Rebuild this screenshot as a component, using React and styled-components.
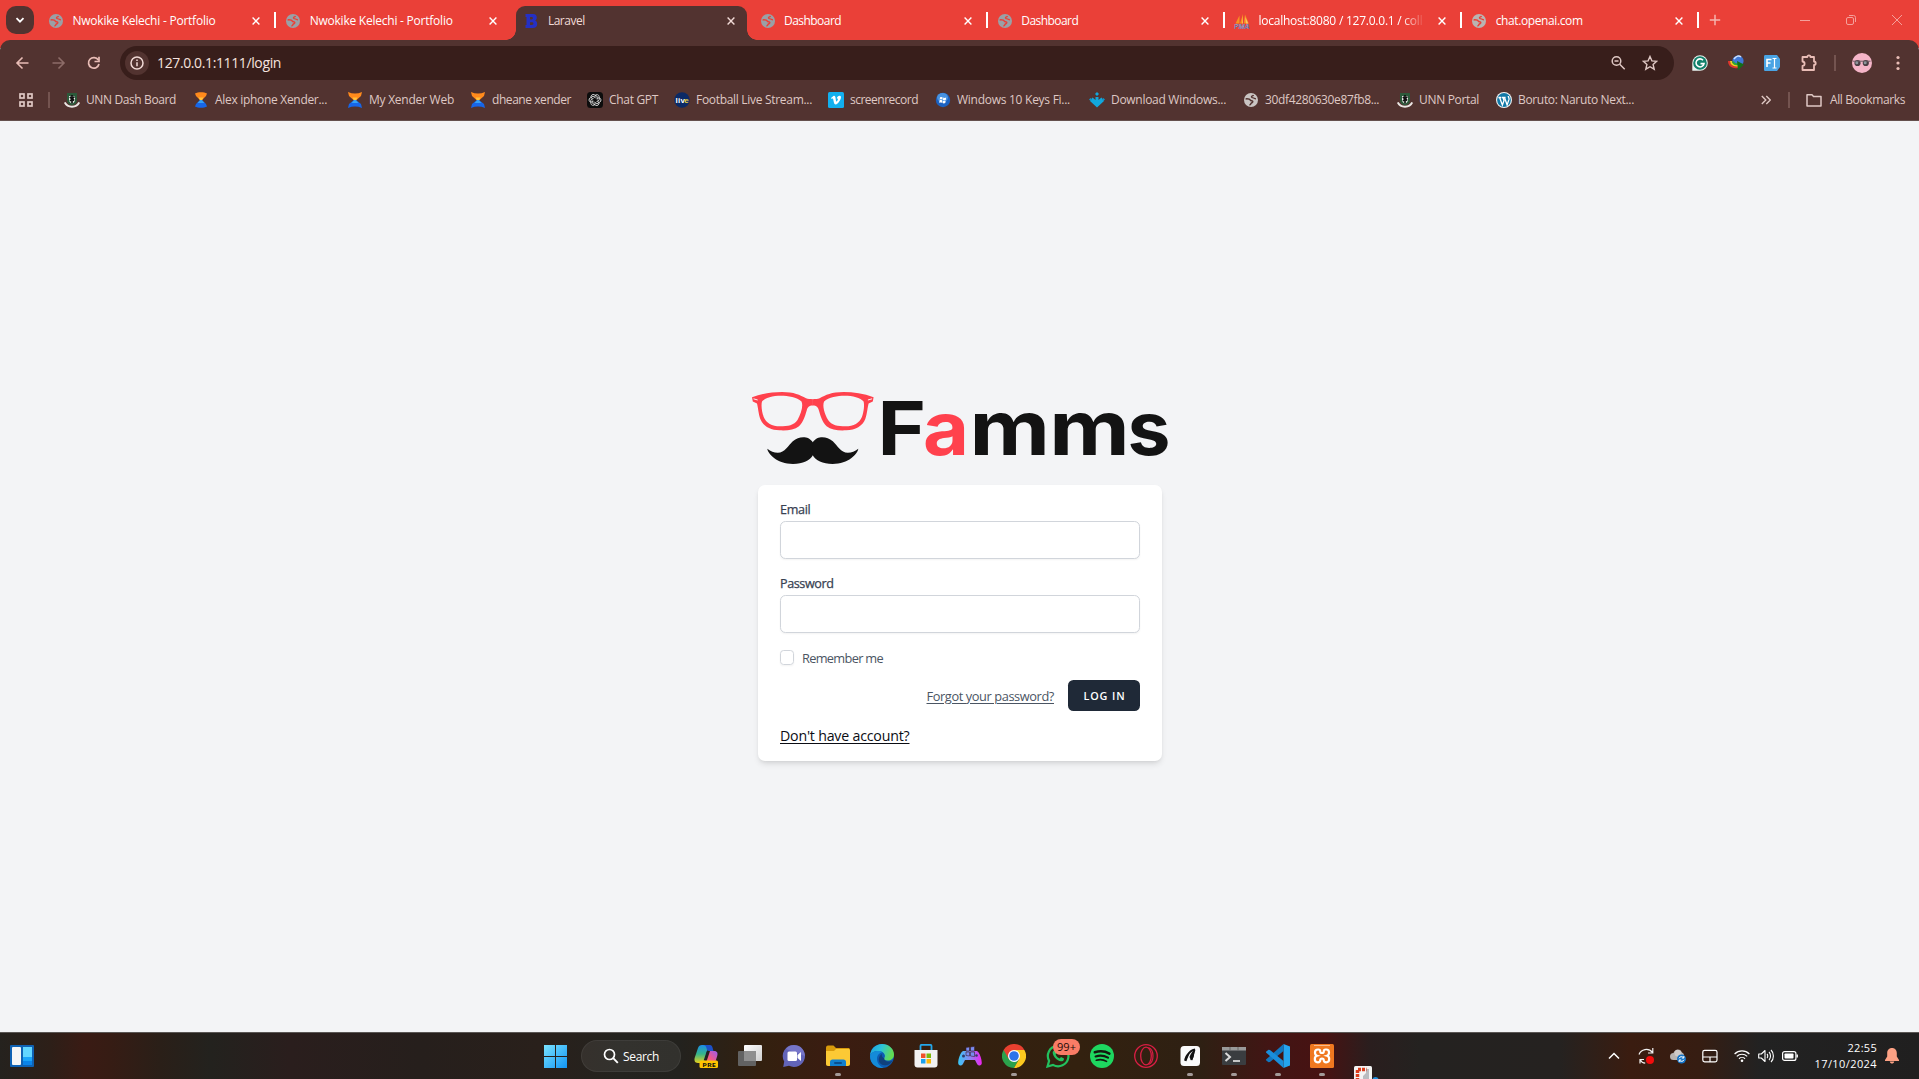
import React, { useLayoutEffect, useRef, useState } from "react";
import styled, { createGlobalStyle } from "styled-components";

const Global = createGlobalStyle`
  * { box-sizing: border-box; }
  html, body { margin: 0; height: 100%; overflow: hidden; background: #f3f4f6; }
  body { font-family: "Open Sans", "Noto Sans", sans-serif; }
  svg { display: block; flex: none; }
  a, label, span { white-space: nowrap; }
`;

/* ---------- text that keeps to a given measure ---------- */
const Measure = styled.span`
  display: block;
  flex: none;
  width: ${(p) => p.$w}px;
  white-space: nowrap;
`;

function Fit({ w, children }) {
  const ref = useRef(null);
  const [spacing, setSpacing] = useState(0);
  useLayoutEffect(() => {
    const range = document.createRange();
    range.selectNodeContents(ref.current);
    const natural = range.getBoundingClientRect().width;
    setSpacing((w - natural) / String(children).length);
  }, [w, children]);
  return (
    <Measure ref={ref} $w={w} style={{ letterSpacing: spacing }}>
      {children}
    </Measure>
  );
}

/* ---------- browser frame ---------- */
const Screen = styled.div`
  width: 1919px;
  height: 1079px;
  display: flex;
  flex-direction: column;
`;

const TabStrip = styled.div`
  flex: none;
  height: 48px;
  margin-bottom: -8px;
  padding-left: 6px;
  display: flex;
  background: #ea4038;
`;

const TabSearch = styled.div`
  width: 28px;
  height: 28px;
  margin: 6px 4px 0 0;
  border-radius: 10px;
  background: #523330;
  display: grid;
  place-items: center;
`;

const Tab = styled.div`
  flex: none;
  width: 237.2px;
  height: 40px;
  display: flex;
  align-items: center;
  padding: 0 14px 0 10px;
  font-size: 12px;
  color: #fff;
`;

const TabInner = styled.div`
  flex: 1;
  position: relative;
  display: flex;
  align-items: center;
  height: 34px;
  padding-bottom: 5px;
  margin: 6px ${(p) => (p.$active ? "-11px 0 -6px" : "0 0 0")};
  padding-left: ${(p) => (p.$active ? "7px" : "0")};
  padding-right: ${(p) => (p.$active ? "12px" : "1px")};
  border-radius: 9px 9px 0 0;
  background: ${(p) => (p.$active ? "#523330" : "transparent")};
  color: ${(p) => (p.$active ? "#f1dad6" : "#fff")};
  &::before, &::after {
    content: "";
    display: ${(p) => (p.$active ? "block" : "none")};
    position: absolute;
    bottom: 0;
    width: 10px;
    height: 10px;
  }
  &::before { left: -10px; background: radial-gradient(circle at 0 0, transparent 9.5px, #523330 10px); }
  &::after { right: -10px; background: radial-gradient(circle at 100% 0, transparent 9.5px, #523330 10px); }
`;

const TabTitle = styled.div`
  flex: 1;
  margin-left: 8.500px;
  line-height: 16px;
  ${(p) => p.$fade && "mask-image: linear-gradient(90deg, #000 80%, transparent 93%);"}
`;

const Separator = styled.div`
  width: 2px;
  height: 16px;
  flex: none;
  margin: 12px -1px 0;
  background: ${(p) => (p.$hidden ? "transparent" : "#fff")};
`;

const NewTab = styled.div`
  margin: 14px 0 0 11px;
  flex: 1;
`;

const WindowButtons = styled.div`
  display: flex;
  gap: 34px;
  padding: 14px 16px 0 0;
`;

const Toolbar = styled.div`
  flex: none;
  position: relative;
  height: 42px;
  padding: 6px 0 2px 15px;
  display: flex;
  align-items: center;
  background: #523330;
  border-radius: 10px 10px 0 0;
`;

const NavIcons = styled.div`
  flex: none;
  display: flex;
  width: 105px;
  gap: 19.500px;
`;

const AddressBar = styled.div`
  flex: none;
  width: 1554px;
  height: 34px;
  border-radius: 17px;
  background: #381e1b;
  display: flex;
  align-items: center;
  padding: 0 16px 0 5px;
  gap: 8px;
  font-size: 14px;
  color: #f6e3df;
`;

const InfoBadge = styled.div`
  width: 24px;
  height: 24px;
  border-radius: 50%;
  background: #523330;
  display: grid;
  place-items: center;
`;

const UrlText = styled.div`
  flex: 1;
  line-height: 20px;
`;

const AddressActions = styled.div`
  display: flex;
  gap: 16px;
`;

const Extensions = styled.div`
  flex: none;
  display: flex;
  align-items: center;
  margin-left: 18px;
  gap: 20px;
`;

const VLine = styled.div`
  width: 2px;
  height: 16px;
  flex: none;
  background: #745450;
`;

const MenuGroup = styled.div`
  flex: none;
  display: flex;
  align-items: center;
  gap: 16px;
  margin-left: 16px;
`;

const BookmarkBar = styled.div`
  flex: none;
  height: 39px;
  padding: 0 14px 2px 19px;
  display: flex;
  align-items: center;
  background: #523330;
  border-bottom: 1px solid #64504d;
  font-size: 12px;
  color: #dfc8c4;
`;

const AppsGroup = styled.div`
  display: flex;
  align-items: center;
  gap: 15px;
  width: 45px;
`;

const Bookmark = styled.div`
  flex: none;
  width: ${(p) => p.$slot}px;
  display: flex;
  align-items: center;
  gap: 6px;
  line-height: 16px;
`;

const BookmarkEnd = styled.div`
  flex: 1;
  display: flex;
  justify-content: flex-end;
  align-items: center;
  line-height: 16px;
`;
const AllBookmarks = styled.div`
  display: flex;
  align-items: center;
  gap: 8px;
  margin-left: 16px;
`;
const More = styled.div`
  margin-right: 17px;
`;

/* ---------- login page ---------- */
const Page = styled.main`
  flex: 1;
  background: #f3f4f6;
  display: flex;
  flex-direction: column;
  align-items: center;
  padding: 271px 0 0 1px;
`;

const Card = styled.form`
  width: 404px;
  height: 276px;
  margin-top: 21px;
  padding: 16px 22px 14px;
  background: #fff;
  border-radius: 7px;
  box-shadow: 0 4px 6px -1px rgba(0, 0, 0, 0.1), 0 2px 4px -2px rgba(0, 0, 0, 0.1);
  display: flex;
  flex-direction: column;
  color: #374151;
`;

const Field = styled.label`
  display: flex;
  flex-direction: column;
  gap: 2px;
  margin-bottom: 16px;
  font-size: 12.6px;
  font-weight: 500;
  -webkit-text-stroke: 0.25px #374151;
  line-height: 18px;
`;

const Input = styled.input`
  height: 38px;
  border: 1px solid #d1d5db;
  border-radius: 5.5px;
  background: #fff;
  outline: none;
  box-shadow: 0 1px 2px rgba(0, 0, 0, 0.05);
`;

const Remember = styled.label`
  display: flex;
  align-items: center;
  gap: 8px;
  height: 18px;
  margin-top: -1px;
  font-size: 12.8px;
  color: #4b5563;
`;

const RememberText = styled.div`
  padding-top: 2px;
`;

const Checkbox = styled.input`
  appearance: none;
  width: 14px;
  height: 15px;
  margin: 0;
  border: 1px solid #d1d5db;
  border-radius: 3.6px;
  box-shadow: 0 1px 2px rgba(0, 0, 0, 0.05);
`;

const Actions = styled.div`
  display: flex;
  align-items: center;
  justify-content: flex-end;
  gap: 14px;
  margin-top: 14px;
`;

const Link = styled.a`
  text-decoration: underline;
  text-underline-offset: 2px;
  text-decoration-thickness: 1px;
  font-size: ${(p) => (p.$dark ? 14.2 : 12.8)}px;
  color: ${(p) => (p.$dark ? "#0b0d14" : "#4b5563")};
  line-height: ${(p) => (p.$dark ? 22 : 18)}px;
  margin-top: ${(p) => (p.$dark ? 14 : 0)}px;
`;

const Submit = styled.button`
  width: 72px;
  height: 31px;
  border: 0;
  border-radius: 5.5px;
  background: #1f2937;
  color: #fff;
  font: 600 10.8px "Open Sans", sans-serif;
  padding: 0 0 1px 15.5px;
  text-align: left;
`;

/* ---------- taskbar ---------- */
const Taskbar = styled.footer`
  flex: none;
  height: 47px;
  border-top: 1px solid #5a5654;
  display: flex;
  align-items: center;
  overflow: hidden;
  background: linear-gradient(90deg, #25221e 0, #2d1f18 50px, #3a1b14 85px, #361c14 110px, #2a1f18 160px,
    #23221e 210px, #2a1e1d 290px, #261f1c 420px, #29201b 540px, #24231f 620px, #23221e 680px, #33200f 760px, #3b1c11 840px,
    #34200f 960px, #33210f 1080px, #2e2013 1200px, #421514 1270px, #471212 1325px, #2a1e1e 1370px, #242220 1420px,
    #252220 1560px, #3a1c10 1630px, #361d12 1700px, #222222 1760px, #201f1f 1919px);
`;

const Widgets = styled.div`
  width: 543px;
  padding-left: 10px;
`;

const SearchPill = styled.div`
  width: 100px;
  height: 32px;
  margin: 0 13px 0 14px;
  border-radius: 16px;
  background: rgba(255, 255, 255, 0.07);
  border: 1px solid rgba(255, 255, 255, 0.06);
  display: flex;
  align-items: center;
  gap: 4px;
  padding-left: 21px;
  font-size: 12px;
  font-weight: 500;
  color: #fff;
`;

const Slot = styled.div`
  flex: none;
  position: relative;
  width: 24px;
  height: 46px;
  margin-right: 20px;
  display: grid;
  place-items: center;
  &::after {
    content: "";
    display: ${(p) => (p.$running ? "block" : "none")};
    position: absolute;
    left: 9px;
    bottom: 3px;
    width: 6px;
    height: 3px;
    border-radius: 2px;
    background: #a39a98;
  }
`;

const Count = styled.div`
  position: absolute;
  left: 7px;
  top: 6px;
  width: 27px;
  height: 16px;
  border-radius: 8px;
  background: #f97c66;
  color: #1c0b08;
  font-size: 11px;
  line-height: 16px;
  padding-left: 4px;
`;

const Snip = styled.div`
  margin-top: 32px;
  align-self: flex-start;
`;

const Tray = styled.div`
  flex: 1;
  display: flex;
  align-items: center;
  justify-content: flex-end;
  padding-right: 20px;
  gap: 8px;
`;

const TrayIcon = styled.div`
  width: 16px;
  margin-right: ${(p) => p.$after || 0}px;
`;

const Clock = styled.div`
  width: 63px;
  display: flex;
  flex-direction: column;
  align-items: flex-end;
  font-size: 11px;
  line-height: 16px;
  color: #fff;
`;

/* ---------- icons ---------- */
const S = ({ s = 16, w, h, v = "0 0 16 16", children, ...p }) => (
  <svg width={w || s} height={h || s} viewBox={v} fill="none" {...p}>{children}</svg>
);

const Globe = ({ c = "#9aa0a6", bg = "#ea4038" }) => (
  <S>
    <circle cx="8" cy="8" r="7" fill={c} />
    <path d="M2.600 6.900c2.600-.2 4.200 0 4.800 1.200.4.900 2.300.2 2.400 1.500.1 1.200-1.700 1-1.900 2.100-.1.700-.6 1.200-1.500 1.300" stroke={bg} strokeWidth="1.500" />
    <path d="M10.500 3c-.3.900-1.700.7-2 1.500-.3.900.9 1.300 1.700 1.300.9 0 1.200 1 2.800 1" stroke={bg} strokeWidth="1.300" />
  </S>
);

const BIcon = () => (
  <S>
    <path fillRule="evenodd" fill="#2530c4" d="M2.500 1h7.500c2.800 0 3.800 1.600 3.800 3.500 0 1.600-.8 2.700-1.800 3.100 1.500.5 2.200 1.700 2.200 3.400 0 2.600-1.600 4-4.300 4H2.500v-3H3.500V4H2.500zM7 4v2.400h1.700c1.700 0 1.700-2.400 0-2.400zM7 9.300V12h2c1.900 0 1.900-2.700 0-2.700z" />
  </S>
);

const Pma = () => (
  <S>
    <path d="M1.500 10.500L5.500 2.500v8zM6 10.500L9 1v9.500zM9.800 10.500L11 1.500l3.800 9z" fill="#f79320" />
    <path d="M8.200 10.500L9 3v7.500zM12 10.500L11.200 4l3 6.500z" fill="#fbc56b" />
    <text x="0" y="15.500" fontSize="7" fontWeight="800" fontStyle="italic" fontFamily="Liberation Sans, sans-serif" fill="#3b4a88" stroke="#d8dcf0" strokeWidth=".25">PMA</text>
  </S>
);

const Close = ({ c = "#fff" }) => (
  <S s={8} v="0 0 8 8"><path d="M.6.6l6.800 6.800M7.400.6L.6 7.400" stroke={c} strokeWidth="1.400" /></S>
);

const Unn = () => (
  <S>
    <path d="M3 1h10v7c0 3-2.500 5-5 5.500C5.500 13 3 11 3 8z" fill="#2c5a3a" />
    <path d="M5 4h6v3.500c0 2-1.200 3.500-3 4-1.800-.5-3-2-3-4z" fill="#e9efe9" />
    <path d="M8 3v8.500M5.800 5l4.400 3.500M10.500 4.500L6 9" stroke="#111" strokeWidth="1.700" />
    <path d="M.8 10.500c1.400 3 4.200 4.200 7.200 4.200s5.800-1.200 7.200-4.200" stroke="#ece7e4" strokeWidth="1.900" />
  </S>
);

const Hourglass = ({ x }) => (
  <S>
    <path d={x ? "M1 0l3.500 1.200L8 1.600l3.500-.4L15 0l-1 4-5 4.500H7L2 4z" : "M2 1.500C5-.3 11-.3 14 1.500L13 4 9 8H7L3 4z"} fill="#ff8a1c" />
    <path d="M5.500 5.500h5L9 8.200H7z" fill="#ffc23c" />
    <path d={x ? "M7 8h2l5 4 1 4-3.500-1.200L8 14.400l-3.500.4L1 16l1-4z" : "M7 8h2l4 4 1 2.500c-3 1.800-9 1.800-12 0L3 12z"} fill="#1766e8" />
    <path d="M7.200 8h1.600l2.600 3H4.600z" fill="#35a2f5" />
  </S>
);

const Knot = () => (
  <S>
    <rect width="16" height="16" rx="3.500" fill="#0d0d0d" />
    {[0, 60, 120, 180, 240, 300].map((a) => (
      <path key={a} transform={`rotate(${a} 8 8)`} d="M8 5.200V3.600a2.300 2.300 0 0 1 4.200 1.300v3.200L9.500 9.600" stroke="#e8e8e8" strokeWidth=".8" />
    ))}
  </S>
);

const Live = () => (
  <S>
    <circle cx="8" cy="8" r="7.700" fill="#0b2a66" />
    <text x="1.400" y="11" fontSize="8" fontWeight="800" fontFamily="Liberation Sans, sans-serif" fill="#fff" textLength="9.500">liv</text>
    <text x="10.300" y="11" fontSize="8" fontWeight="800" fontFamily="Liberation Sans, sans-serif" fill="#e7d33c">e</text>
  </S>
);

const Vimeo = () => (
  <S>
    <rect width="16" height="16" rx="1.500" fill="#12b0ef" />
    <path d="M3 6l2.400-2c1.300-.7 1.800.2 2 1.300l.6 3.400c.2 1 .6 1 1.100.2.7-1 1-1.700.7-2.200-.2-.4-.7-.3-1-.2.400-1.800 1.500-2.800 2.800-2.700 1.600.1 1.600 1.700 1 3.100C11.800 9 9.500 12 7.900 12.400c-1.200.1-1.700-.9-2-2L5.200 7.300c-.2-.8-.6-.9-1.500-.3z" fill="#fff" />
  </S>
);

const WinOrb = () => (
  <S>
    <circle cx="8" cy="8" r="7.200" fill="#1b62c2" />
    <ellipse cx="7.500" cy="5.500" rx="5.500" ry="4.500" fill="#5aa7ee" opacity=".7" />
    <path d="M5 5.400c1-.7 1.800-.6 2.700 0L7.300 7.800c-.9-.6-1.800-.6-2.700 0zM8.300 5.600c.9.5 1.800.5 2.900 0L10.800 8c-1.100.5-1.900.5-2.900 0zM4.500 8.500c.9-.6 1.800-.6 2.700 0l-.4 2.400c-.9-.6-1.800-.6-2.700 0zM7.800 8.700c.9.500 1.800.5 2.900 0l-.4 2.400c-1.100.5-1.900.5-2.900 0z" fill="#fff" />
  </S>
);

const Downloads = () => (
  <S>
    <path d="M8 0l2 2-2 2-2-2zM8 15.500L1 9l2.500-3.500L6.500 8V5h3v3l3-2.500L15 9z" fill="#12a7dc" />
    <path d="M0 7.500l1.600-1.600 1.600 1.600L1.600 9zM12.800 7.500l1.600-1.600L16 7.500 14.400 9z" fill="#0f94c8" />
  </S>
);

const WordPress = () => (
  <S>
    <circle cx="8" cy="8" r="8" fill="#f1f1f1" />
    <circle cx="8" cy="8" r="6.900" fill="#1179a8" />
    <path d="M2.400 5.500h3M3.600 5.500l2.800 7.500L8 8.500 7 5.500M6 5.500h3.600M8.500 5.500l2.600 7.500 1.900-5.600c.4-1.500-.9-2-.7-3.400" stroke="#fff" strokeWidth="1.300" />
  </S>
);

const tabs = [
  ["Nwokike Kelechi - Portfolio", 143, <Globe />],
  ["Nwokike Kelechi - Portfolio", 143, <Globe />],
  ["Laravel", 37, <BIcon />, true],
  ["Dashboard", 57, <Globe />],
  ["Dashboard", 57, <Globe />],
  ["localhost:8080 / 127.0.0.1 / coll", 164, <Pma />],
  ["chat.openai.com", 87, <Globe c="#b9b4b2" />],
];

const bookmarks = [
  ["UNN Dash Board", 90, 129, <Unn />],
  ["Alex iphone Xender...", 112, 154, <Hourglass />],
  ["My Xender Web", 85, 123, <Hourglass x />],
  ["dheane xender", 79, 117, <Hourglass x />],
  ["Chat GPT", 49, 87, <Knot />],
  ["Football Live Stream...", 116, 154, <Live />],
  ["screenrecord", 68, 107, <Vimeo />],
  ["Windows 10 Keys Fi...", 113, 154, <WinOrb />],
  ["Download Windows...", 115, 154, <Downloads />],
  ["30df4280630e87fb8...", 114, 154, <Globe c="#c9c4c2" bg="#523330" />],
  ["UNN Portal", 60, 99, <Unn />],
  ["Boruto: Naruto Next...", 116, 140, <WordPress />],
];

/* taskbar applications, drawn on a 24px grid */
const T = (p) => <S s={24} v="0 0 24 24" {...p} />;
const apps = [
  [<T>
    <defs>
      <linearGradient id="cp1" x1="0" y1="0" x2="0" y2="1"><stop stopColor="#1b8de8" /><stop offset=".5" stopColor="#35b58a" /><stop offset="1" stopColor="#e8d21c" /></linearGradient>
      <linearGradient id="cp2" x1="1" y1="0" x2="0" y2="1"><stop stopColor="#9a5cf0" /><stop offset=".6" stopColor="#f0588a" /><stop offset="1" stopColor="#ff8a50" /></linearGradient>
    </defs>
    <path d="M8 1h7l-2 6-3 12H4c-3.500 0-4-3-3.200-5.500L4 4c.6-2 2-3 4-3z" fill="url(#cp1)" />
    <path d="M9 1h7c1.500 0 2 1 2.500 2.500L19.500 7H15c-2 0-2-1-2.500-3C12 2 11 1 9 1z" fill="#1c50c8" />
    <path d="M16 7h4c3.500 0 4 2.500 3.200 5L21 19H12z" fill="url(#cp2)" />
    <path d="M13.500 7.500l-3 9" stroke="#20202c" strokeWidth="1.600" />
    <rect x="5.500" y="16.500" width="18.500" height="7.500" rx="1.500" fill="#ffc400" />
    <text x="8.300" y="22.500" fontSize="6" fontWeight="700" fontFamily="Open Sans, sans-serif" fill="#111" textLength="13.500" lengthAdjust="spacingAndGlyphs">PRE</text>
  </T>],
  [<T><defs><linearGradient id="tv" x2="1" y2="1"><stop stopColor="#fff" /><stop offset="1" stopColor="#cfcfcf" /></linearGradient></defs>
    <rect x="6" y="1" width="18" height="16" rx="1" fill="url(#tv)" /><rect y="7" width="18" height="15" rx="1" fill="#626262" /><rect x="6" y="7" width="12" height="10" fill="#8f8f8f" /></T>],
  [<T><path d="M12 1a11 11 0 1 1-5 20.800L1.200 23l1-5.600A11 11 0 0 1 12 1z" fill="#6264b8" /><path d="M12 1a11 11 0 0 1 11 11L4 5a11 11 0 0 1 8-4z" fill="#8a86d8" opacity=".5" />
    <rect x="5.500" y="7.500" width="9.500" height="9.500" rx="1.500" fill="#fff" /><path d="M15.500 11l3.500-3v9l-3.500-3z" fill="#fff" /></T>],
  [<T><path d="M0 4c0-1.500.6-2.500 2-2.500h5.500L10 4h12c1.300 0 2 .6 2 2v6H0z" fill="#d99a0b" /><path d="M0 7h8l2-2h12c1.300 0 2 .6 2 2v13c0 1.300-.7 2-2 2H2c-1.300 0-2-.7-2-2z" fill="#fcc935" />
    <path d="M4 22v-4c0-1.500 1-2.500 2.500-2.500h11c1.500 0 2.500 1 2.500 2.500v4z" fill="#1180cf" /><rect x="8" y="18" width="8" height="2" rx="1" fill="#0a4f8f" /></T>, true],
  [<T>
    <defs><linearGradient id="ed1" x1="0" y1="0" x2="1" y2=".3"><stop stopColor="#1c9fe0" /><stop offset=".5" stopColor="#2cc3d8" /><stop offset="1" stopColor="#62dc52" /></linearGradient></defs>
    <circle cx="12" cy="12" r="12" fill="#0c5cb4" />
    <path d="M.1 11.500C.5 5 5.500 0 12 0c7 0 12 5 12 10.500 0 4-3 6-6.300 6-3 0-4.200-1.400-3.700-2.300 1-1.200 1.200-2 .7-3.500C14 8.500 11.500 7 8.500 7 4 7 1 9 .1 11.500z" fill="url(#ed1)" />
    <path d="M.1 11.500C1 9 4 7 8.500 7c1.500 0 3 .5 4 1.300C8.500 9 7 12 7 15c0 4 3 7.500 6.500 8.900C6 24.800-.5 19 .1 11.500z" fill="#148bd8" />
    <path d="M14.600 14.300c-.9 1.200.9 3.300 3.600 3.300 2 0 3.600-.6 4.600-1.400-2 4-5 5-8 5-4 0-6.500-3-6-6.500.2-2 1.500-3.800 3.200-4.700-.7 2.200.4 4 2.600 4.300z" fill="#12335f" opacity=".65" /></T>],
  [<T><path d="M6.500 6V2c0-.8.4-1.200 1.200-1.200h8.600c.8 0 1.200.4 1.200 1.200v4" stroke="#24a7ea" strokeWidth="1.800" /><path d="M.5 6h23v14.500c0 2-1 3-3 3h-17c-2 0-3-1-3-3z" fill="#f2f2f2" />
    <path d="M7 9.500h4.500V14H7z" fill="#f0502a" /><path d="M12.500 9.500H17V14h-4.500z" fill="#7db80b" /><path d="M7 15h4.500v4.500H7z" fill="#1aa0ee" /><path d="M12.500 15H17v4.500h-4.500z" fill="#fdb80b" /></T>],
  [<T><defs><linearGradient id="gp" x1="0" x2="1"><stop stopColor="#38c8f5" /><stop offset=".5" stopColor="#8a86f5" /><stop offset="1" stopColor="#ee22ee" /></linearGradient></defs>
    <path d="M5 7h14c2.500 1 4.800 8 4.800 12 0 3-3.500 3.500-5 .5L17 16H7l-1.800 3.500c-1.500 3-5 2.500-5-.5C.2 15 2.500 8 5 7z" fill="url(#gp)" />
    <path d="M8 3.500l3.500-.5v4H8zM12.500 3l4-.6V7h-4zM8 8h3.500v4L8 11.500zM12.500 8h4v4.600l-4-.6z" fill="#7a8cf0" stroke="#3a2030" strokeWidth=".6" />
    <circle cx="5.500" cy="12" r="1.500" fill="#333a6a" /><circle cx="18.500" cy="11.500" r="1.300" fill="#333a6a" /></T>],
  [<T><path d="M12 12L1.600 6A12 12 0 0 0 12 24l5.200-9z" fill="#2ba24c" /><path d="M12 6h10.400A12 12 0 0 1 12 24l5.200-9z" fill="#fcc91f" /><path d="M1.600 6A12 12 0 0 1 22.400 6H12L6.800 15z" fill="#e8402f" />
    <circle cx="12" cy="12" r="6" fill="#fff" /><circle cx="12" cy="12" r="4.800" fill="#2b74ea" /></T>, true],
  [<T><path d="M1.500 22.500l1.600-5.600A10.300 10.300 0 1 1 7 20.900z" stroke="#22c15e" strokeWidth="2.200" /><path d="M8 6.500c-1 .5-1.600 1.700-1.200 3 1 3.800 4.200 7 8 7.800 1.300.2 2.700-.4 3-1.600l.2-1.100-3-1.500-1.300 1.500c-2-.8-3.300-2.200-4.100-4l1.100-1.400L9.500 6.500z" fill="#22c15e" /></T>, false, true],
  [<T><circle cx="12" cy="12" r="12" fill="#1ed760" /><path d="M4.800 8.300c5-1.500 10.500-1 14.600 1.300" stroke="#14180f" strokeWidth="2.500" strokeLinecap="round" /><path d="M5.600 12.400c4-1.200 8.800-.8 12.400 1.300" stroke="#14180f" strokeWidth="2.100" strokeLinecap="round" /><path d="M6.300 16.200c3.500-1 7.200-.7 10.200 1.200" stroke="#14180f" strokeWidth="1.700" strokeLinecap="round" /></T>],
  [<T><circle cx="12" cy="12" r="11.300" stroke="#d81e44" strokeWidth="1.300" /><ellipse cx="12" cy="12" rx="5.300" ry="8.800" stroke="#d81e44" strokeWidth="1.300" /><path d="M14.500 3.500c6 2.500 6 14.500 0 17" stroke="#d81e44" strokeWidth="1.200" /></T>],
  [<T><rect x="2.500" y="2" width="19.500" height="20" rx="3.500" fill="#fafafa" /><path d="M17 5.500c-3.500.5-6 3-7.500 6L7.500 17M16.500 5.500L13.500 16" stroke="#111" strokeWidth="2" /><path d="M16.500 6c-2 1-4 4-5 7l1.500 3.500c2-1.500 3-4 3-6zM11 8.500c-3 1.500-4.500 5-5 8.500l4-4z" fill="#111" /></T>, true],
  [<T><rect y="3" width="24" height="18" rx="1" fill="#3a3d40" /><rect y="3" width="24" height="3.500" fill="#9a9a9a" /><path d="M8 3v3.500M16 3v3.500" stroke="#666" /><path d="M3.500 9l4.500 4-4.500 4" stroke="#dcdcdc" strokeWidth="2" /><path d="M11 17h7" stroke="#f4f4f4" strokeWidth="1.500" /></T>, true],
  [<T><path d="M17.500 0L24 2.500v19L17.500 24z" fill="#24a5f0" /><path d="M17.500 0v7L4 18l-1.500.3L0 16.300V15.500z" fill="#1077c0" /><path d="M17.500 24v-7L4 6l-1.500-.3L0 7.700v.8z" fill="#1a8edb" /></T>, true],
  [<T><rect width="24" height="24" rx="1.500" fill="#f07820" /><path d="M4 1.500h16" stroke="#f8b98a" /><path d="M8 5.500h.3c1.500 0 2 1 2 2.200 0 1 .5 1.300 1.700 1.300s1.700-.3 1.700-1.300c0-1.200.5-2.200 2-2.200h.6c1.700 0 2.700 1.200 2.700 3s-1 3-2 3.300c1 .3 2.200 1.500 2.200 3.200 0 2-1.200 3.300-3 3.300-1.700 0-2.500-1-2.500-2.300 0-1.100-.5-1.500-1.700-1.500s-1.700.4-1.700 1.500c0 1.300-.8 2.300-2.500 2.300-1.800 0-3-1.300-3-3.300C4.800 13.300 6 12.100 7 11.800c-1-.3-2-1.500-2-3.300s1.300-3 3-3z" stroke="#fff" strokeWidth="2.200" /></T>, true],
];

function Logo() {
  const half = "M61 50.500C58 46.500 55 45.300 51.300 45.300c-4 0-7 1.200-10.500 4-4.500 4-8 11.500-15 11.500-4 0-7-1.300-10.500-4C16 62 25 72 41 72c10 0 17-3.500 20-9z";
  const rim = "M0 5.300C10 1.500 20 0 30 0c12 0 18 3 24 6.300 2 .7 4 .9 6.900.9v6.300c-4 0-5.200 1.500-6.200 5C53 24 51.500 30 47 34.300c-4.500 3.500-12 4.500-19.500 4C18 38 11 34 8.300 27 6.500 22 6 15 5 11.500L.8 9.500zM10 9.500c-1 3.500-.3 10 1.700 15.500C14 31 20 34.300 28 34.300c8 0 14-1 17.500-6.300C49 22 51.500 14 49.500 9.500 45 5 36 3.700 29 3.700c-8 0-16 2-19 5.800z";
  const letter = { fontFamily: "Inter, sans-serif", fontWeight: 700, fontSize: 74.500, lengthAdjust: "spacingAndGlyphs", fill: "#131313" };
  return (
    <S w={416} h={72} v="0 0 416 72" overflow="visible">
      <path fillRule="evenodd" fill="#ff414d" d={rim} />
      <path fillRule="evenodd" fill="#ff414d" d={rim} transform="translate(121.600 0) scale(-1 1)" />
      <path d="M1.500 6.800l4.200 1.200M120.100 6.800l-4.200 1.200" stroke="#f3f4f6" strokeWidth="1" />
      <path fill="#131313" d={half} />
      <path fill="#131313" d={half} transform="translate(121.600 0) scale(-1 1)" />
      <text {...letter} x="125.500" y="62.700" textLength="48.500">F</text>
      <text {...letter} x="171" y="62.700" textLength="46" fill="#ff414d">a</text>
      <text {...letter} x="217.500" y="62.700" textLength="80.500">m</text>
      <text {...letter} x="297.200" y="62.700" textLength="80.500">m</text>
      <text {...letter} x="375.500" y="62.700" textLength="43">s</text>
    </S>
  );
}

export default function App() {
  const pink = "#e9bdb6";
  const soft = "#dfc8c4";
  return (
    <Screen>
      <Global />
      <TabStrip>
        <TabSearch><S s={10} v="0 0 10 10"><path d="M1.500 3.200L5 6.700l3.500-3.500" stroke="#fff" strokeWidth="1.800" /></S></TabSearch>
        {tabs.map(([title, w, icon, active], i) => (
          <React.Fragment key={i}>
            <Tab>
              <TabInner $active={active}>
                {icon}
                <TabTitle $fade={w > 160}><Fit w={w}>{title}</Fit></TabTitle>
                <Close c={active ? "#f1dad6" : "#fff"} />
              </TabInner>
            </Tab>
            <Separator $hidden={i === 1 || i === 2} />
          </React.Fragment>
        ))}
        <NewTab><S s={12} v="0 0 12 12"><path d="M6 .8v10.400M.8 6h10.400" stroke="#f5b4ae" strokeWidth="1.500" /></S></NewTab>
        <WindowButtons>
          <S s={12} v="0 0 12 12"><path d="M1 6.500h10" stroke="#f4a09b" /></S>
          <S s={12} v="0 0 12 12"><rect x="1.500" y="3.500" width="7" height="7" rx="1.500" stroke="#f4a09b" /><path d="M4 1.500h4.500a2 2 0 0 1 2 2V8" stroke="#f4a09b" /></S>
          <S s={12} v="0 0 12 12"><path d="M1 1l10 10M11 1L1 11" stroke="#f4a09b" /></S>
        </WindowButtons>
      </TabStrip>

      <Toolbar>
        <NavIcons>
          <S><path d="M13.500 8H2M7.500 2.500L2 8l5.500 5.500" stroke={pink} strokeWidth="1.600" /></S>
          <S><path d="M1.500 8H13M7.500 2.500L13 8l-5.500 5.500" stroke="#8d6c68" strokeWidth="1.600" /></S>
          <S><path d="M12.300 5A5.300 5.300 0 1 0 13 9" stroke={pink} strokeWidth="1.700" /><path d="M13 1.800v4.700H8.500" stroke={pink} strokeWidth="1.700" /></S>
        </NavIcons>
        <AddressBar>
          <InfoBadge><S s={14} v="0 0 14 14"><circle cx="7" cy="7" r="6" stroke="#f1dad6" strokeWidth="1.500" /><path d="M7 6.200v4M7 3.500v1.500" stroke="#f1dad6" strokeWidth="1.500" /></S></InfoBadge>
          <UrlText><Fit w={124}>127.0.0.1:1111/login</Fit></UrlText>
          <AddressActions>
            <S><circle cx="6.500" cy="6" r="4.300" stroke={soft} strokeWidth="1.500" /><path d="M9.700 9.200l5 5M4.500 6h4" stroke={soft} strokeWidth="1.500" /></S>
            <S><path d="M8 1.500l1.900 4.400 4.800.4-3.600 3.200 1.100 4.700L8 11.700l-4.200 2.500 1.100-4.700L1.300 6.300l4.800-.4z" stroke={soft} strokeWidth="1.400" /></S>
          </AddressActions>
        </AddressBar>
        <Extensions>
          <S><path d="M8 .2A7.800 7.800 0 1 1 8 15.800H.3V8A7.700 7.700 0 0 1 8 .2z" fill="#e9f3f0" /><circle cx="8" cy="8" r="6.800" fill="#11806a" /><path d="M11 5.200A4 4 0 1 0 12 8.600H8.500" stroke="#fff" strokeWidth="1.600" /></S>
          <S><circle cx="10" cy="6" r="5.600" fill="#3f78d8" /><path d="M6 4c2-3 5-4 7-2" stroke="#cfe2ff" strokeWidth="1.500" /><path d="M1 6c0 5 4 7 9 6" stroke="#e0352b" strokeWidth="2" /><path d="M3 6c0 3.500 3 5 7 4.500" stroke="#f5d020" strokeWidth="2" /><path d="M5 6.500c.5 2 2.500 3 5 2.500" stroke="#29a53a" strokeWidth="2" /><path d="M9 6l7 3.500-6 5.500z" fill="#127018" /></S>
          <S><path d="M1.500 0H13l3 4v8l-3 4H1.500C.5 16 0 15.500 0 14.500v-13C0 .5.500 0 1.500 0z" fill="#4aa4e4" /><path d="M3 12V4.500h4.500M3 8h3.500" stroke="#fff" strokeWidth="1.600" /><path d="M8.500 3.500h4M8.500 13h4M10.500 3.500V13" stroke="#fff" strokeWidth="1.200" /></S>
          <S w={18} h={18} v="0 0 18 18"><path d="M2.500 3h4.800a1.600 1.600 0 0 1 3.200 0H14v4.500a1.700 1.700 0 0 1 0 3.400V16H2.500v-4c2.800-.2 2.800-4.300 0-4.500z" stroke={pink} strokeWidth="1.800" strokeLinejoin="round" /></S>
        </Extensions>
        <MenuGroup>
          <VLine />
          <S s={20} v="0 0 20 20"><circle cx="10" cy="10" r="10" fill="#f5b5c8" /><circle cx="5.500" cy="10" r="3.100" fill="#4a3e44" /><circle cx="13.800" cy="10" r="3.100" fill="#4a3e44" /><path d="M1 8.200h17.500" stroke="#6b5a62" /><circle cx="4.800" cy="9.800" r="1.500" fill="#8a959a" /><circle cx="13.200" cy="9.800" r="1.500" fill="#8a959a" /></S>
          <S s={16} style={{ marginLeft: 2 }}><circle cx="8" cy="2.500" r="1.600" fill={pink} /><circle cx="8" cy="8" r="1.600" fill={pink} /><circle cx="8" cy="13.500" r="1.600" fill={pink} /></S>
        </MenuGroup>
      </Toolbar>

      <BookmarkBar>
        <AppsGroup>
          <S s={14} v="0 0 14 14">{[[1, 1], [9, 1], [1, 9], [9, 9]].map(([x, y]) => <rect key={x + "-" + y} x={x} y={y} width="4" height="4" stroke={soft} strokeWidth="1.700" />)}</S>
          <VLine />
        </AppsGroup>
        {bookmarks.map(([name, w, slot, icon]) => (
          <Bookmark key={name} $slot={slot}>{icon}<Fit w={w}>{name}</Fit></Bookmark>
        ))}
        <BookmarkEnd>
          <More><S s={10} v="0 0 10 10"><path d="M.8 1l4 4-4 4M5.300 1l4 4-4 4" stroke={soft} strokeWidth="1.400" /></S></More>
          <VLine />
          <AllBookmarks>
            <S><path d="M1 2.800h5L7.500 4.500H15V14H1z" stroke={soft} strokeWidth="1.500" strokeLinejoin="round" /></S>
            <Fit w={75}>All Bookmarks</Fit>
          </AllBookmarks>
        </BookmarkEnd>
      </BookmarkBar>

      <Page>
        <Logo />
        <Card>
          <Field><Fit w={30.500}>Email</Fit><Input type="email" /></Field>
          <Field><Fit w={53.500}>Password</Fit><Input type="password" /></Field>
          <Remember><Checkbox type="checkbox" /><RememberText><Fit w={81}>Remember me</Fit></RememberText></Remember>
          <Actions>
            <Link><Fit w={127.500}>Forgot your password?</Fit></Link>
            <Submit type="button"><Fit w={42}>LOG IN</Fit></Submit>
          </Actions>
          <Link $dark><Fit w={129.500}>Don't have account?</Fit></Link>
        </Card>
      </Page>

      <Taskbar>
        <Widgets>
          <S w={24} h={22} v="0 0 24 22"><rect width="24" height="22" rx="1" fill="#0f62b4" /><rect x="2" y="2" width="9" height="18" rx="1" fill="#f6f6f6" /><rect x="13" y="2" width="9" height="10" fill="#62d6ff" /><rect x="13" y="12" width="9" height="4" fill="#1aa5fa" /><rect x="13" y="16" width="9" height="4" fill="#0a84ea" /></S>
        </Widgets>
        <T>
          <defs><linearGradient id="win" gradientUnits="userSpaceOnUse" x1="0" y1="0" x2="24" y2="24"><stop stopColor="#7ee6ff" /><stop offset="1" stopColor="#1195f5" /></linearGradient></defs>
          <path d="M1 1h11v11H1zM13 1h11v11H13zM1 13h11v11H1zM13 13h11v11H13z" fill="url(#win)" />
        </T>
        <SearchPill>
          <S><circle cx="6.500" cy="6.500" r="5" stroke="#fff" strokeWidth="1.700" /><path d="M10.200 10.200l4.600 4.600" stroke="#fff" strokeWidth="1.900" /></S>
          <Fit w={36}>Search</Fit>
        </SearchPill>
        {apps.map(([icon, running, count], i) => (
          <Slot key={i} $running={running}>{icon}{count && <Count><Fit w={19}>99+</Fit></Count>}</Slot>
        ))}
        <Snip>
          <S w={26} h={20} v="0 0 26 20"><rect x="0" y="1" width="18" height="20" rx="1.500" fill="#f4f4f4" /><path d="M12 4h3v16h-6v-9l3-3z" fill="#b9bcc0" /><path d="M3.500 20V4.500h9" stroke="#dc3d1c" strokeWidth="3.500" strokeDasharray="3 1" /><path d="M18.500 14.500c0-3.500 6-3.500 6 0z" fill="#1e90e0" /></S>
        </Snip>
        <Tray>
          <TrayIcon $after={8}><S><path d="M3 10.500l5-5 5 5" stroke="#fff" strokeWidth="1.500" /></S></TrayIcon>
          <TrayIcon $after={8}><S><path d="M1 6.500C3 1 10.500-.5 14.500 4.500M14.800 0v5H10M2 15.500v-4h4M2.200 11.800c1 2 3 3.300 5 3.400" stroke="#f2f2f2" strokeWidth="1.200" /><circle cx="12" cy="12" r="4" fill="#f30d0d" /></S></TrayIcon>
          <TrayIcon $after={8}><S><path d="M3.500 12a3.500 3.500 0 0 1 0-7A4.500 4.500 0 0 1 12 4.500c2 .5 2.500 3 2 7.500z" fill="#b8b4b2" /><circle cx="8" cy="5" r="3.500" fill="#dedad8" opacity=".6" /><circle cx="11.500" cy="11" r="4.500" fill="#1273c8" /><path d="M9 10.300c.7-2 3.500-2.200 4.600-.5M14 11.700c-.7 2-3.500 2.200-4.600.5M13.800 8v2h-2M9.200 14v-2h2" stroke="#fff" /></S></TrayIcon>
          <TrayIcon $after={8}><S><rect x=".8" y="2.300" width="14.200" height="11.500" rx="1.800" stroke="#fff" strokeWidth="1.200" /><path d="M1 9h14M8 9v5" stroke="#fff" strokeWidth="1.200" /></S></TrayIcon>
          <TrayIcon><S><path d="M.6 6a10.500 10.500 0 0 1 14.800 0M2.800 8.400a7.400 7.400 0 0 1 10.400 0M5 10.700a4.300 4.300 0 0 1 6 0" stroke="#fff" strokeWidth="1.200" /><circle cx="8" cy="12.700" r="1.300" fill="#fff" /></S></TrayIcon>
          <TrayIcon><S><path d="M.7 6v4h2.600L7 13.500v-11L3.300 6z" stroke="#fff" strokeWidth="1.100" strokeLinejoin="round" /><path d="M9 6c1 1 1 3 0 4M11 4c2 2 2 6 0 8M13 2c3.200 3 3.200 9 0 12" stroke="#fff" strokeWidth="1.100" /></S></TrayIcon>
          <TrayIcon $after={8}><S><rect x=".6" y="3.600" width="13.300" height="8.800" rx="2" stroke="#fff" strokeWidth="1.200" /><rect x="2.500" y="5.500" width="9" height="5" rx=".8" fill="#fff" /><path d="M15.200 6.500v3" stroke="#fff" strokeWidth="1.400" /></S></TrayIcon>
          <Clock><Fit w={29.500}>22:55</Fit><Fit w={62.500}>17/10/2024</Fit></Clock>
          <S w={14} h={16} v="0 0 14 16"><path d="M7 0c3 0 4.800 2.300 4.800 5v3.500L14 12v1H0v-1l2.200-3.500V5C2.200 2.300 4 0 7 0zM4.800 13.500h4.400C9 15 8 15.500 7 15.500s-2-.5-2.200-2z" fill="#fda184" /></S>
        </Tray>
      </Taskbar>
    </Screen>
  );
}
